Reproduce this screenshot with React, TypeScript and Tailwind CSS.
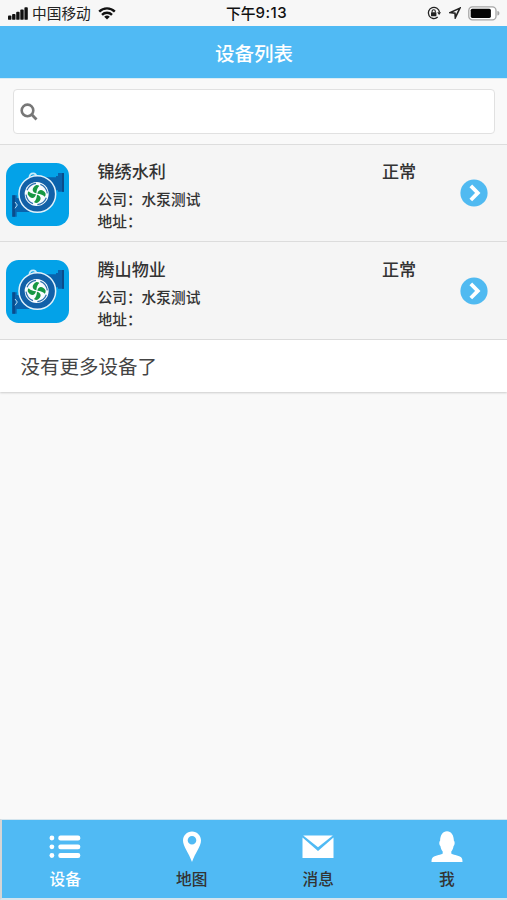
import React from "react";

type Device = { name: string; company: string; address: string; status: string };

const devices: Device[] = [
  { name: "锦绣水利", company: "水泵测试", address: "", status: "正常" },
  { name: "腾山物业", company: "水泵测试", address: "", status: "正常" },
];

function SignalIcon() {
  return (
    <svg className="h-[13px] w-[20px]" viewBox="0 0 20 13" fill="#111">
      <rect x="0" y="8.6" width="3.4" height="4.2" rx="0.9" />
      <rect x="4.1" y="7" width="3.4" height="5.8" rx="0.9" />
      <rect x="8.2" y="4.8" width="3.4" height="8" rx="0.9" />
      <rect x="12.3" y="2.6" width="3.4" height="10.2" rx="0.9" />
      <rect x="16.4" y="0.2" width="3.4" height="12.6" rx="0.9" />
    </svg>
  );
}

function WifiIcon() {
  return (
    <svg className="h-[13px] w-[18px]" viewBox="0 0 18 13" fill="none" stroke="#111" strokeWidth="2.4">
      <path d="M1.2 4.6a11 11 0 0 1 15.6 0" />
      <path d="M4 7.8a7.1 7.1 0 0 1 10 0" />
      <path d="M9 12.5 6.2 9.8a4 4 0 0 1 5.6 0z" fill="#111" stroke="none" />
    </svg>
  );
}

function RotationLockIcon() {
  return (
    <svg className="h-[14px] w-[14px]" viewBox="0 0 14 14" fill="none" stroke="#222">
      <path d="M10.7 11.1A5.6 5.6 0 1 1 12.5 6.4" strokeWidth="1.3" />
      <path d="M10.2 6.2h3.8l-1.9 2.9z" fill="#222" stroke="none" />
      <rect x="4" y="6.2" width="5.4" height="4" rx="0.5" fill="#222" stroke="none" />
      <path d="M5.1 6.5V5.3a1.6 1.6 0 0 1 3.2 0v1.2" strokeWidth="1.1" />
    </svg>
  );
}

function LocationIcon() {
  return (
    <svg className="h-[12px] w-[12px]" viewBox="0 0 12 12" fill="none" stroke="#222" strokeWidth="1.6">
      <path d="M10.9 1.1 1.3 5.6l4.7.5.3 4.6z" />
    </svg>
  );
}

function BatteryIcon() {
  return (
    <svg className="h-[15px] w-[32px]" viewBox="0 0 32 15">
      <rect x="0.8" y="0.8" width="27.2" height="13" rx="3.6" fill="#fff" stroke="#a5a5a5" strokeWidth="1.3" />
      <rect x="2.7" y="2.7" width="20.2" height="9.2" rx="1.6" fill="#050505" />
      <path d="M29.4 5c1.5.3 2 1.2 2 2.3s-.5 2-2 2.3z" fill="#a5a5a5" />
    </svg>
  );
}

function SearchIcon() {
  return (
    <svg className="h-[18px] w-[18px]" viewBox="0 0 18 18" fill="none" stroke="#777">
      <circle cx="7.5" cy="7.4" r="5.8" strokeWidth="2.6" />
      <path d="m11.7 11.6 4.8 4.8" strokeWidth="2.8" />
    </svg>
  );
}

function PumpIcon() {
  return (
    <svg className="h-[63px] w-[63px] shrink-0" viewBox="0 0 189 189">
      <rect width="189" height="189" rx="38" fill="#03a2e8" />
      <path d="M70 46q0-15 12-15 8 0 10 10" fill="none" stroke="#c9ecfa" strokeWidth="5" />
      <path d="M94 43h56v-4h6v-9h18v56h-18v-4h-22z" fill="#0963ad" />
      <path d="M174 30v56h-6V30z" fill="#0a4c8b" />
      <path d="M19 97h13v8h15l53 42H32v14H19z" fill="#0963ad" />
      <path d="M19 97h8v64h-8z" fill="#0a4c8b" />
      <path d="m27 117 7 9-7 10" fill="none" stroke="#b9def2" strokeWidth="3" />
      <circle cx="94" cy="93" r="55" fill="#1261a8" stroke="#e1f2fb" strokeWidth="4.5" />
      <circle cx="92" cy="93" r="36" fill="#f8fcff" />
      <g fill="none" stroke="#2b70ae" strokeWidth="3.5">
        <path d="M63 82q7-18 27-21" />
        <path d="M103 64q18 7 21 27" />
        <path d="M121 104q-7 18-27 21" />
        <path d="M81 122q-18-7-21-27" />
      </g>
      <g fill="#169743">
        <path d="M91 91C76 88 77 73 91 66q7 0 9 3-8 7-9 22z" />
        <path d="M94 92c3-15 18-14 25 0q0 7-3 9-7-8-22-9z" />
        <path d="M93 95c15 3 14 18 0 25q-7 0-9-3 8-7 9-22z" />
        <path d="M90 94c-3 15-18 14-25 0q0-7 3-9 7 8 22 9z" />
      </g>
    </svg>
  );
}

function DetailIcon() {
  return (
    <svg className="h-[28px] w-[28px]" viewBox="0 0 28 28">
      <circle cx="14" cy="14" r="13.6" fill="#50baf1" />
      <path d="m10.8 6.8 7 7.1-7 7.1" fill="none" stroke="#fff" strokeWidth="3.8" />
    </svg>
  );
}

function ListIcon() {
  return (
    <svg className="h-[32px] w-[32px]" viewBox="0 0 32 32" fill="#fff">
      <circle cx="2.9" cy="7" r="2.4" />
      <circle cx="2.9" cy="15.8" r="2.4" />
      <circle cx="2.9" cy="24.5" r="2.4" />
      <rect x="9.3" y="4.6" width="22" height="4.8" rx="2.2" />
      <rect x="9.3" y="13.4" width="22" height="4.8" rx="2.2" />
      <rect x="9.3" y="22.1" width="22" height="4.8" rx="2.2" />
    </svg>
  );
}

function PinIcon() {
  return (
    <svg className="h-[32px] w-[32px]" viewBox="0 0 32 32" fill="#fff">
      <path fillRule="evenodd" d="M16 .4c5.1 0 9 4 9 9 0 6-5.8 12.3-9 21.5-3.2-9.2-9-15.5-9-21.5 0-5 3.9-9 9-9zm0 4.5a4.3 4.3 0 1 0 0 8.6 4.3 4.3 0 0 0 0-8.600z" />
    </svg>
  );
}

function MailIcon() {
  return (
    <svg className="h-[32px] w-[32px]" viewBox="0 0 32 32" fill="#fff">
      <path d="M1.2 4.5h29.6L16 16.2z" />
      <path d="M.5 6.5 16 20 31.5 6.5v20.6H.5z" />
    </svg>
  );
}

function PersonIcon() {
  return (
    <svg className="h-[32px] w-[32px]" viewBox="0 0 32 32" fill="#fff">
      <path d="M16 .2c4.300 0 6.800 4 6.900 9.600 1 .5 1.100 4.200-.3 5.200-.4 2.400-1.300 4.200-2.300 5.400v2c.9 1.300 7 1.400 9.800 3.800 1.200 1 1.400 3 1.400 4.800H.5c0-1.800.2-3.800 1.400-4.800 2.800-2.400 8.900-2.500 9.800-3.800v-2C10.700 19.200 9.800 17.400 9.400 15 8 14 8.100 10.300 9.100 9.800 9.200 4.200 11.700.2 16 .2z" />
    </svg>
  );
}

function DeviceRow({ device }: { device: Device }) {
  return (
    <li className="flex h-[97.500px] border-b border-[#dcdcdc] bg-[#f5f5f5] pl-[6px] text-[#333]">
      <div className="pt-[18px]"><PumpIcon /></div>
      <div className="ml-[28.500px] w-[284.500px] pt-[13.500px] font-medium">
        <h2 className="text-[17.100px] leading-[25px]">{device.name}</h2>
        <p className="mt-[5px] text-[14.700px] leading-[22px]">公司：{device.company}</p>
        <p className="text-[14.700px] leading-[22px]">地址：{device.address}</p>
      </div>
      <span className="w-[78px] pt-[13.500px] text-[17.100px] leading-[25px] font-medium">{device.status}</span>
      <button className="h-[28px] pt-[34.500px]" aria-label="详情"><DetailIcon /></button>
    </li>
  );
}

const tabs = [
  { label: "设备", Icon: ListIcon, style: "w-[126.500px] text-white" },
  { label: "地图", Icon: PinIcon, style: "w-[126.500px] text-[#333]" },
  { label: "消息", Icon: MailIcon, style: "w-[126.500px] text-[#333]" },
  { label: "我", Icon: PersonIcon, style: "w-[125.500px] pl-[5px] text-[#333]" },
];

export default function App() {
  return (
    <div className="flex h-[900px] w-[507px] flex-col overflow-hidden bg-[#f9f9f9] font-['Noto_Sans_CJK_SC',sans-serif]">
      <div className="flex h-[25.500px] shrink-0 items-center bg-[#f7f7f7] pt-[1px] pl-[8px] text-[15px] leading-[24px] text-[#222]">
        <SignalIcon />
        <span className="ml-[4px] w-[58px] whitespace-nowrap text-[14.700px]">中国移动</span>
        <span className="ml-[8px]"><WifiIcon /></span>
        <span className="ml-[110px] flex w-[62px] whitespace-nowrap font-medium text-[#111]">
          <span className="text-[14.800px]">下午</span>
          <span className="font-['Inter',sans-serif] text-[15px] tracking-[0.500px]">9:13</span>
        </span>
        <span className="ml-[139px]"><RotationLockIcon /></span>
        <span className="ml-[8px]"><LocationIcon /></span>
        <span className="ml-[7px]"><BatteryIcon /></span>
      </div>
      <header className="flex h-[53.500px] shrink-0 items-center justify-center border-b border-[#d9edf5] bg-[#50baf4] pt-[1px] pl-[1px]">
        <h1 className="text-[19.500px] font-medium leading-[29px] text-white">设备列表</h1>
      </header>
      <div className="h-[65.500px] shrink-0 border-b border-[#dddddd] px-[13px] pt-[10px]">
        <div className="flex h-[45px] w-[482px] items-center rounded-[4px] border-[1.500px] border-[#e1e1e1] bg-white pl-[6px]">
          <SearchIcon />
          <input aria-label="搜索" className="h-full flex-1 outline-none" />
        </div>
      </div>
      <ul className="shrink-0">
        {devices.map((device) => <DeviceRow key={device.name} device={device} />)}
      </ul>
      <p className="h-[52.500px] shrink-0 bg-white pt-[11.500px] pl-[20.500px] text-[19.500px] leading-[29px] text-[#444] shadow-[0_1px_2px_#ccc]">没有更多设备了</p>
      <main className="flex-1" />
      <nav className="flex h-[81px] shrink-0 border-t border-b-2 border-l-2 border-t-[#d4e5ee] border-b-[#d4e5ee] border-l-[#d5d5d5] bg-[#50baf4]">
        {tabs.map(({ label, Icon, style }) => (
          <div key={label} className={`${style} flex shrink-0 flex-col items-center pt-[11px]`}>
            <Icon />
            <span className="mt-[4px] text-[15.700px] font-medium leading-[24px]">{label}</span>
          </div>
        ))}
      </nav>
    </div>
  );
}
